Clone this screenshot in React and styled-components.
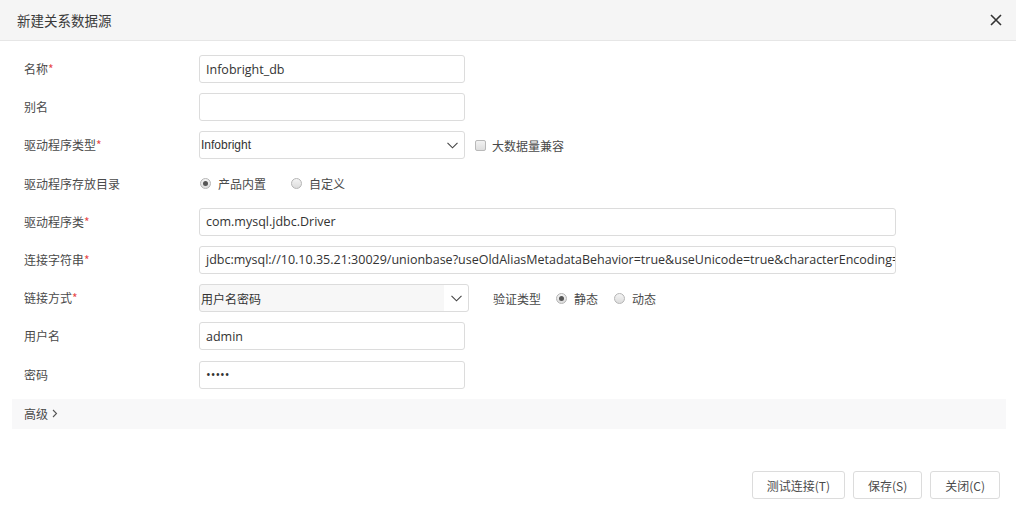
import React from "react";
import styled, { createGlobalStyle } from "styled-components";

const Global = createGlobalStyle`
  html, body { margin: 0; padding: 0; background: #fff; }
  body { font-family: "Noto Sans CJK SC", "Open Sans", sans-serif; color: #333; }
  * { box-sizing: border-box; }
`;

const Dialog = styled.div`
  width: 1016px;
  height: 512px;
  display: flex;
  flex-direction: column;
  background: #fff;
`;

const Header = styled.div`
  height: 41px;
  flex: none;
  display: flex;
  align-items: center;
  justify-content: space-between;
  padding: 0 12px 0 17px;
  background: #f5f5f5;
  border-bottom: 1px solid #e6e6e6;
`;

const Title = styled.div`
  font-size: 13.5px;
  color: #3a3a3a;
`;

const CloseBtn = styled.div`
  width: 16px;
  height: 16px;
  display: flex;
  align-items: center;
  justify-content: center;
  margin-top: -1px;
`;

const Form = styled.div`
  display: grid;
  grid-template-columns: 175px 1fr;
  row-gap: 10.2px;
  padding: 14px 0 0 24px;
  align-items: center;
`;

const Label = styled.div`
  font-size: 12px;
  color: #4a4a4a;
  height: 28px;
  line-height: 27px;
`;

const Star = styled.span`
  color: #e84a4a;
`;

const Field = styled.div`
  display: flex;
  align-items: center;
  height: 28px;
`;

const Input = styled.div`
  width: ${(p) => p.$w}px;
  height: 28px;
  border: 1px solid #dcdcdc;
  border-radius: 3px;
  padding: 0 6px;
  display: flex;
  align-items: center;
  font-family: "Open Sans", sans-serif;
  font-size: 12.5px;
  color: #333;
  white-space: nowrap;
  overflow: hidden;
  background: #fff;
`;

const Select = styled.div`
  width: ${(p) => p.$w}px;
  height: 28px;
  border: 1px solid #dcdcdc;
  border-radius: 3px;
  padding: 0 6px 0 1px;
  display: flex;
  align-items: center;
  justify-content: space-between;
  font-family: ${(p) => (p.$cjk ? '"Noto Sans CJK SC", sans-serif' : '"Liberation Sans", Arial, sans-serif')};
  font-size: 12px;
  color: #333;
  background: ${(p) => (p.$bg ? "linear-gradient(to right, #f7f7f7 calc(100% - 24px), #fff calc(100% - 24px))" : "#fff")};
`;

const Checkbox = styled.span`
  width: 11px;
  height: 11px;
  border: 1px solid #b9b9b9;
  border-radius: 2px;
  background: linear-gradient(#f2f2f2, #dedede);
  margin: 0 6px 0 10px;
`;

const Option = styled.span`
  font-size: 12px;
  color: #4a4a4a;
  margin-right: ${(p) => p.$mr || 0}px;
`;

const Radio = styled.span`
  width: 11px;
  height: 11px;
  border-radius: 50%;
  border: 1px solid #b5b5b5;
  background: linear-gradient(#f4f4f4, #dcdcdc);
  display: flex;
  align-items: center;
  justify-content: center;
  margin: 0 7px 0 ${(p) => p.$ml || 0}px;
  &::after {
    content: "";
    width: 5px;
    height: 5px;
    border-radius: 50%;
    background: ${(p) => (p.$checked ? "#555" : "transparent")};
  }
`;

const InlineLabel = styled.span`
  font-size: 12px;
  color: #4a4a4a;
  margin: 0 15px 0 24px;
`;

const Advanced = styled.div`
  margin: 10px 10px 0 12px;
  height: 30px;
  background: #f8f8f9;
  display: flex;
  align-items: center;
  padding-left: 12px;
  font-size: 12px;
  color: #4a4a4a;
  gap: 4px;
`;

const Footer = styled.div`
  margin-top: auto;
  display: flex;
  justify-content: flex-end;
  gap: 8px;
  padding: 0 16px 13px 0;
`;

const Button = styled.div`
  height: 28px;
  padding: 0 ${(p) => p.$px}px;
  border: 1px solid #dcdcdc;
  border-radius: 3px;
  background: #fff;
  display: flex;
  align-items: center;
  font-size: 12px;
  color: #4a4a4a;
`;

const Chevron = () => (
  <svg width="11" height="7" viewBox="0 0 11 7">
    <path d="M0.5 0.8 L5.5 5.8 L10.5 0.8" fill="none" stroke="#444" strokeWidth="1.1" />
  </svg>
);

export default function App() {
  return (
    <Dialog>
      <Global />
      <Header>
        <Title>新建关系数据源</Title>
        <CloseBtn>
          <svg width="12" height="12" viewBox="0 0 12 12">
            <path d="M1 1 L11 11 M11 1 L1 11" stroke="#333" strokeWidth="1.6" />
          </svg>
        </CloseBtn>
      </Header>
      <Form>
        <Label>名称<Star>*</Star></Label>
        <Field><Input $w={266}>Infobright_db</Input></Field>

        <Label>别名</Label>
        <Field><Input $w={266} /></Field>

        <Label>驱动程序类型<Star>*</Star></Label>
        <Field>
          <Select $w={266}>
            <span>Infobright</span>
            <Chevron />
          </Select>
          <Checkbox />
          <Option>大数据量兼容</Option>
        </Field>

        <Label>驱动程序存放目录</Label>
        <Field>
          <Radio $checked $ml={1} />
          <Option $mr={25}>产品内置</Option>
          <Radio />
          <Option>自定义</Option>
        </Field>

        <Label>驱动程序类<Star>*</Star></Label>
        <Field><Input $w={697}>com.mysql.jdbc.Driver</Input></Field>

        <Label>连接字符串<Star>*</Star></Label>
        <Field>
          <Input $w={697}>jdbc:mysql://10.10.35.21:30029/unionbase?useOldAliasMetadataBehavior=true&amp;useUnicode=true&amp;characterEncoding=utf8</Input>
        </Field>

        <Label>链接方式<Star>*</Star></Label>
        <Field>
          <Select $w={270} $cjk $bg>
            <span>用户名密码</span>
            <Chevron />
          </Select>
          <InlineLabel>验证类型</InlineLabel>
          <Radio $checked />
          <Option $mr={16}>静态</Option>
          <Radio />
          <Option>动态</Option>
        </Field>

        <Label>用户名</Label>
        <Field><Input $w={266}>admin</Input></Field>

        <Label>密码</Label>
        <Field><Input $w={266}>•••••</Input></Field>
      </Form>
      <Advanced>
        <span>高级</span>
        <svg width="6" height="9" viewBox="0 0 6 9">
          <path d="M1 1 L4.5 4.5 L1 8" fill="none" stroke="#555" strokeWidth="1.1" />
        </svg>
      </Advanced>
      <Footer>
        <Button $px={14}>测试连接(T)</Button>
        <Button $px={14}>保存(S)</Button>
        <Button $px={14}>关闭(C)</Button>
      </Footer>
    </Dialog>
  );
}
